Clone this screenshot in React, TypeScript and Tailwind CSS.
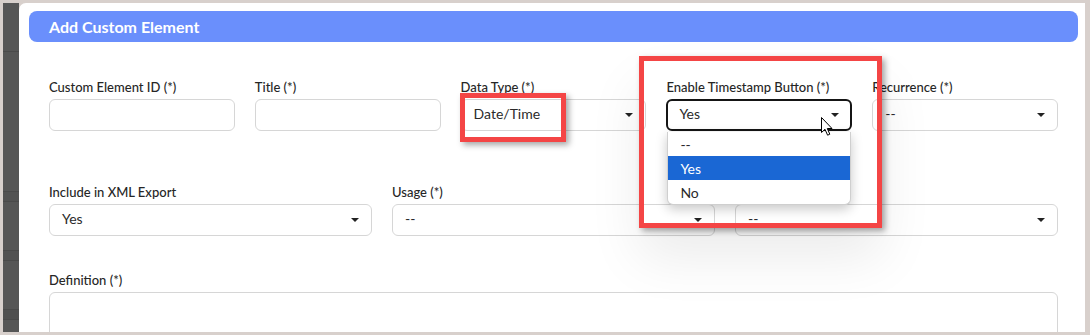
import React from "react";

function Caret() {
  return (
    <svg viewBox="0 0 8 4" className="w-[8px] h-[4px] shrink-0" aria-hidden>
      <path d="M0 0 L8 0 L4 4 Z" fill="#222" />
    </svg>
  );
}

function Label({ children }: { children: React.ReactNode }) {
  return (
    <div className="text-[13px] leading-[16px] font-medium text-[#262626] mb-[4px] whitespace-nowrap">{children}</div>
  );
}

function TextInput() {
  return <div className="h-[32px] rounded-[6px] border border-[#d6d6d6] bg-white" />;
}

function Select({ value, open = false }: { value: string; open?: boolean }) {
  return (
    <div
      className={
        open
          ? "h-[32px] rounded-[6px] border-2 border-[#151515] bg-white flex items-center justify-between pl-[11px] pr-[11px]"
          : "h-[32px] rounded-[6px] border border-[#d6d6d6] bg-white flex items-center justify-between pl-[12px] pr-[12px]"
      }
    >
      <span className="text-[14px] leading-[16px] text-[#2a2a2a] -mt-[2px]">{value}</span>
      <Caret />
    </div>
  );
}

function Field({ label, children }: { label: string; children: React.ReactNode }) {
  return (
    <div className="relative">
      <Label>{label}</Label>
      {children}
    </div>
  );
}

function Cursor() {
  return (
    <svg viewBox="0 0 12 19" className="w-[12px] h-[19px]" aria-hidden>
      <path
        d="M0.5 0.5 L0.5 15.5 L4 12.3 L6.6 18.2 L8.8 17.2 L6.3 11.5 L11 11.5 Z"
        fill="#fff"
        stroke="#000"
        strokeWidth="1"
        strokeLinejoin="round"
      />
    </svg>
  );
}

export default function App() {
  return (
    <div className="relative w-[1090px] h-[335px] overflow-hidden bg-[#d8d0cc] pt-[3px] pl-[3px] pr-[5px] pb-[3px] flex font-['Lato',sans-serif]">
      {/* background app strip */}
      <div className="w-[16px] bg-[#565656] flex flex-col">
        <div className="h-[49px] border-b border-[#4a4a4a]" />
        <div className="h-[140px] border-b border-[#4a4a4a]" />
        <div className="h-[10px] bg-[#525252] border-b border-[#4a4a4a]" />
        <div className="h-[49px] border-b border-[#4a4a4a]" />
        <div className="h-[10px] bg-[#525252] border-b border-[#4a4a4a]" />
        <div className="h-[49px] border-b border-[#4a4a4a]" />
        <div className="h-[10px] bg-[#505050] border-b border-[#4a4a4a]" />
      </div>

      {/* modal */}
      <div className="flex-1 bg-white rounded-tl-[7px] pl-[10px] pr-[7px] pt-[8px] overflow-hidden">
        <div className="h-[31px] rounded-[8px] bg-[#6a8ffc] flex items-center pl-[20px] text-white font-bold text-[16px]">
          Add Custom Element
        </div>

        <div className="px-[20px]">
          <div className="mt-[37px] grid grid-cols-5 gap-x-[20px]">
            <Field label="Custom Element ID (*)">
              <TextInput />
            </Field>
            <Field label="Title (*)">
              <TextInput />
            </Field>
            <Field label="Data Type (*)">
              <Select value="Date/Time" />
            </Field>
            <Field label="Enable Timestamp Button (*)">
              <Select value="Yes" open />
              <div className="absolute left-[1px] right-[1px] top-[53px] bg-white border border-[#cfcfcf] border-t-0 rounded-b-[6px] shadow-[0_4px_12px_rgba(0,0,0,0.22)] z-10 text-[14px] text-[#2a2a2a] overflow-hidden">
                <div className="h-[24px] flex items-center pl-[12px]">--</div>
                <div className="h-[24px] flex items-center pl-[12px] bg-[#1a67d4] text-white">Yes</div>
                <div className="h-[24px] flex items-center pl-[12px]">No</div>
              </div>
            </Field>
            <Field label="Recurrence (*)">
              <Select value="--" />
            </Field>
          </div>

          <div className="mt-[53px] grid grid-cols-3 gap-x-[20px]">
            <Field label="Include in XML Export">
              <Select value="Yes" />
            </Field>
            <Field label="Usage (*)">
              <Select value="--" />
            </Field>
            <Field label="Status (*)">
              <Select value="--" />
            </Field>
          </div>

          <div className="mt-[36px]">
            <Label>Definition (*)</Label>
            <div className="h-[60px] rounded-[6px] border border-[#d6d6d6]" />
          </div>
        </div>
      </div>

      {/* annotation boxes */}
      <div className="absolute left-[460px] top-[93px] w-[106px] h-[49px] border-[5px] border-[#f44545] shadow-[3px_3px_6px_rgba(0,0,0,0.35)] z-20" />
      <div className="absolute left-[639px] top-[56px] w-[243px] h-[172px] border-[5px] border-[#f44545] shadow-[3px_3px_6px_rgba(0,0,0,0.35),0_30px_50px_rgba(0,0,0,0.08)] z-20" />

      {/* mouse cursor */}
      <div className="absolute left-[821px] top-[117px] z-30">
        <Cursor />
      </div>
    </div>
  );
}
